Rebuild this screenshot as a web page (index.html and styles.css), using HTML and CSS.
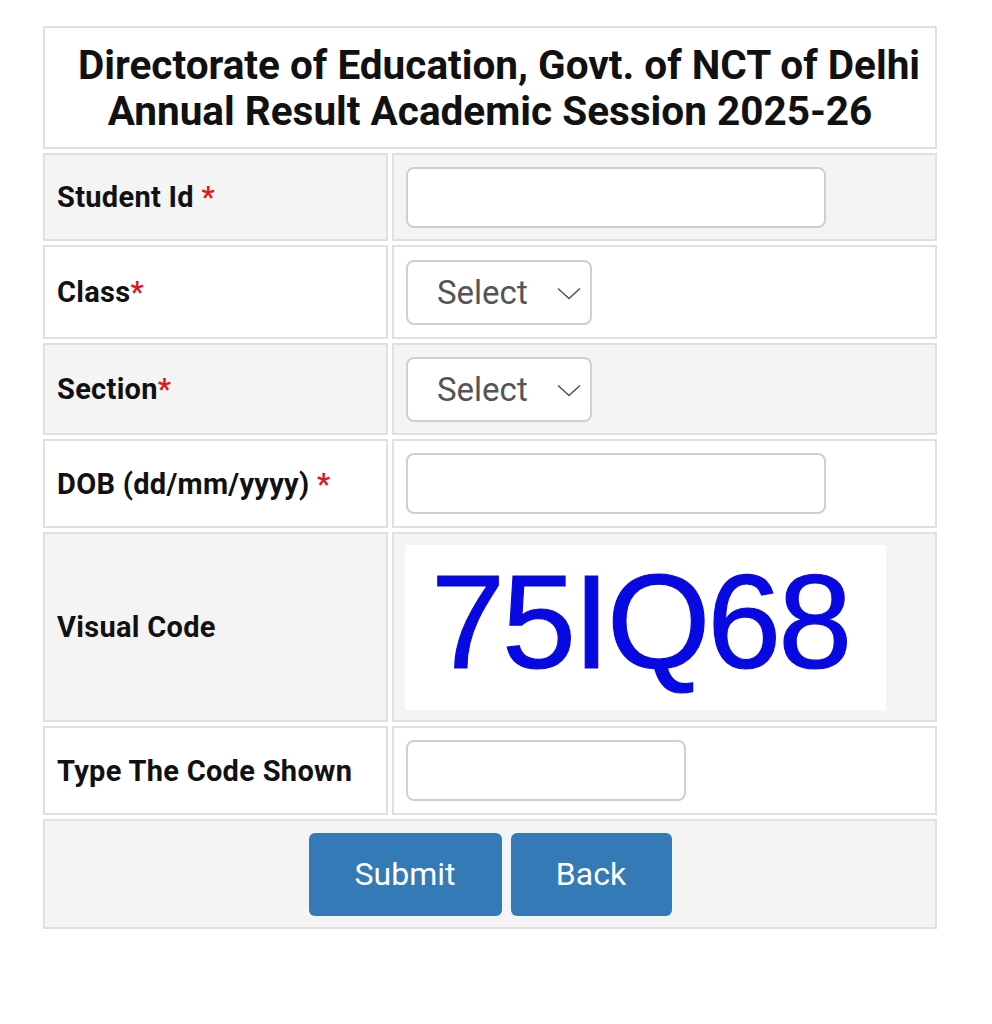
FILE: index.html
```html
<!DOCTYPE html>
<html>
<head>
<meta charset="utf-8">
<link rel="stylesheet" href="styles.css">
</head>
<body>
<div class="page">
<table class="form">
  <colgroup><col class="c-label"><col class="c-field"></colgroup>
  <tr class="r-head">
    <td colspan="2" class="head"><span class="l1">Directorate of Education, Govt. of NCT of Delhi</span><br>Annual Result Academic Session 2025-26</td>
  </tr>
  <tr class="r1 gray">
    <td class="label">Student Id <span class="req">*</span></td>
    <td class="field"><input class="txt wide" type="text"></td>
  </tr>
  <tr class="r2">
    <td class="label">Class<span class="req">*</span></td>
    <td class="field"><div class="sel"><select><option>Select</option></select><svg class="chev" width="24" height="13" viewBox="0 0 24 13"><path d="M1 1.5 L12 11.5 L23 1.5" fill="none" stroke="#555" stroke-width="1.6"/></svg></div></td>
  </tr>
  <tr class="r3 gray">
    <td class="label">Section<span class="req">*</span></td>
    <td class="field"><div class="sel"><select><option>Select</option></select><svg class="chev" width="24" height="13" viewBox="0 0 24 13"><path d="M1 1.5 L12 11.5 L23 1.5" fill="none" stroke="#555" stroke-width="1.6"/></svg></div></td>
  </tr>
  <tr class="r4">
    <td class="label">DOB (dd/mm/yyyy) <span class="req">*</span></td>
    <td class="field"><input class="txt wide" type="text"></td>
  </tr>
  <tr class="r5 gray">
    <td class="label">Visual Code</td>
    <td class="field"><div class="captcha">75IQ68</div></td>
  </tr>
  <tr class="r6">
    <td class="label">Type The Code Shown</td>
    <td class="field"><input class="txt short" type="text"></td>
  </tr>
  <tr class="r7 gray">
    <td colspan="2" class="actions"><div class="btns"><button class="btn submit">Submit</button><button class="btn back">Back</button></div></td>
  </tr>
</table>
</div>
</body>
</html>
```

FILE: styles.css
```css
html, body {
  margin: 0;
  padding: 0;
  background: #fff;
}
.page {
  padding: 22px 0 0 39px;
}
.form {
  border-collapse: separate;
  border-spacing: 4px;
  width: 902px;
  table-layout: fixed;
}
.c-label { width: 345px; }
.c-field { width: 545px; }
.form td {
  border: 2px solid #e0e0e0;
  padding: 0 12px;
  vertical-align: middle;
}
.form tr.gray td {
  background: #f4f4f4;
}
.head {
  height: 119px;
  text-align: center;
  font-family: Roboto, "Liberation Sans", sans-serif;
  font-weight: bold;
  font-size: 40.5px;
  line-height: 46px;
  color: #111;
  white-space: nowrap;
}
.head .l1 {
  display: inline-block;
  margin-left: 18px;
}
.label {
  font-family: Roboto, "Liberation Sans", sans-serif;
  font-weight: bold;
  font-size: 29px;
  letter-spacing: 0.3px;
  color: #111;
}
.req {
  color: #e0191f;
}
.r1 td { height: 84px; }
.r2 td { height: 90px; }
.r3 td { height: 88px; }
.r4 td { height: 85px; }
.r5 td { height: 186px; }
.r6 td { height: 85px; }
.r7 td { height: 106px; }
.txt {
  display: block;
  box-sizing: border-box;
  height: 61px;
  border: 2px solid #cfcfcf;
  border-radius: 8px;
  background: #fff;
  margin: 0;
}
.wide { width: 420px; }
.short { width: 280px; }
.sel {
  position: relative;
  width: 186px;
  height: 65px;
}
.sel select {
  appearance: none;
  -webkit-appearance: none;
  box-sizing: border-box;
  width: 186px;
  height: 65px;
  border: 2px solid #cfcfcf;
  border-radius: 8px;
  background: #fff;
  font-family: Roboto, "Liberation Sans", sans-serif;
  font-size: 33px;
  color: #555;
  padding: 0 0 0 29px;
  margin: 0;
}
.chev {
  position: absolute;
  left: 151px;
  top: 27px;
}
.captcha {
  width: 481px;
  height: 165px;
  margin-left: -1px;
  background: #fff;
  box-sizing: border-box;
  padding-left: 26px;
  font-family: "Liberation Sans", Arial, sans-serif;
  font-size: 133px;
  line-height: 154px;
  color: #0808e0;
  -webkit-text-stroke: 1.2px #0808e0;
  letter-spacing: -3px;
  white-space: nowrap;
}
.actions {
  text-align: center;
}
.btns {
  display: flex;
  justify-content: center;
  gap: 9px;
}
.btn {
  height: 83px;
  border: none;
  border-radius: 6px;
  background: #337ab7;
  color: #fff;
  font-family: Roboto, "Liberation Sans", sans-serif;
  font-size: 32px;
  padding: 0;
}
.submit { width: 193px; }
.back { width: 161px; }
```
